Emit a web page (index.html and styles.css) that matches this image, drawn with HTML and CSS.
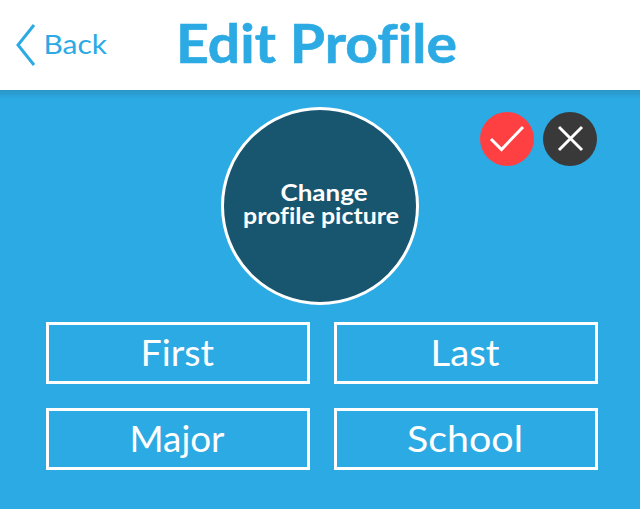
FILE: index.html
```html
<!DOCTYPE html>
<html lang="en">
<head>
<meta charset="utf-8">
<title>Edit Profile</title>
<link rel="stylesheet" href="styles.css">
</head>
<body>
<header class="bar">
  <a class="back"><svg class="chevron" width="20" height="42" viewBox="0 0 20 42"><path d="M18 1 2 21 18 41"/></svg><span class="back-label"><svg class="fit" width="63" height="40"><text x="-1.5" y="29.5" textLength="63.5" lengthAdjust="spacingAndGlyphs">Back</text></svg></span></a>
  <h1 class="title"><svg class="fit" width="282" height="80"><text x="-2" y="52.5" textLength="281" lengthAdjust="spacingAndGlyphs">Edit Profile</text></svg></h1>
</header>
<main class="content">
  <section class="top">
    <button class="avatar"><svg class="fit" width="160" height="60"><text x="40.5" y="24.5" textLength="87" lengthAdjust="spacingAndGlyphs">Change</text><text x="3" y="47.5" textLength="156" lengthAdjust="spacingAndGlyphs">profile picture</text></svg></button>
    <div class="actions">
      <button class="round confirm" aria-label="Save"><svg width="54" height="54"><path d="M11 27 21.5 37.5 43 15"/></svg></button>
      <button class="round cancel" aria-label="Cancel"><svg width="54" height="54"><path d="M16 15 39 38M39 15 16 38"/></svg></button>
    </div>
  </section>
  <form class="fields">
    <div class="field"><svg class="fit" width="258" height="56"><text x="91.5" y="40.5" textLength="73.5" lengthAdjust="spacingAndGlyphs">First</text></svg></div>
    <div class="field"><svg class="fit" width="258" height="56"><text x="93.5" y="40.5" textLength="69" lengthAdjust="spacingAndGlyphs">Last</text></svg></div>
    <div class="field"><svg class="fit" width="258" height="56"><text x="80.5" y="40.5" textLength="95" lengthAdjust="spacingAndGlyphs">Major</text></svg></div>
    <div class="field"><svg class="fit" width="258" height="56"><text x="70" y="40.5" textLength="116" lengthAdjust="spacingAndGlyphs">School</text></svg></div>
  </form>
</main>
</body>
</html>
```
FILE: styles.css
```css
*{box-sizing:border-box}
body{margin:0;width:640px;height:509px;overflow:hidden;background:#2caae3;font-family:Lato,"Open Sans",sans-serif;font-variant-ligatures:none}
svg{display:block}
button{border:0;padding:0;font:inherit;color:inherit}
.fit{overflow:visible;fill:currentColor}
.bar{display:flex;height:90px;background:#fff;color:#2caae3;padding-left:16px}
.back{display:flex;width:162px;padding-top:24px}
.chevron{fill:none;stroke:currentColor;stroke-width:3}
.back-label{margin-left:9px;font-size:26.5px}
.title{margin:0;padding-top:10px;font-size:53px;font-weight:700}
.title .fit{stroke:currentColor;stroke-width:.6px}
.content{height:419px;background:linear-gradient(#2b95c7,#2caae3 9px)}
.top{display:flex;padding:17px 0 0 221px;height:232px}
.avatar{width:198px;height:198px;border:3px solid #fff;border-radius:50%;background:#18556f;color:#fff;display:grid;place-items:center;font-size:22px;line-height:1;font-weight:700}
.actions{display:flex;gap:9px;margin:5px 0 0 61px}
.round{width:54px;height:54px;border-radius:50%}
.round svg{fill:none;stroke:#fff;stroke-width:3}
.confirm{background:#ff4043}
.cancel{background:#393939}
.fields{display:grid;grid-template-columns:264px 264px;grid-auto-rows:62px;gap:24px;padding-left:46px;color:#fff;font-size:36.5px}
.field{border:3px solid #fff}
```
